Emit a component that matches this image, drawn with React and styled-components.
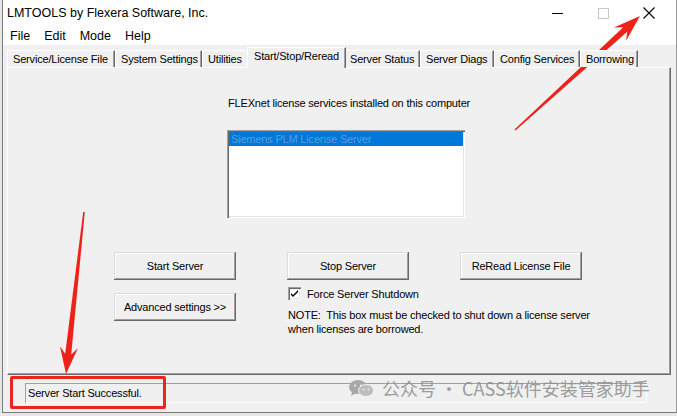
import styled, { createGlobalStyle } from "styled-components";

const GlobalStyle = createGlobalStyle`
  html, body {
    margin: 0;
    padding: 0;
  }
  body {
    background: #e6e6e6;
    font-family: "Liberation Sans", Arial, sans-serif;
    font-size: 11px;
    color: #000;
  }
`;

const Page = styled.div`
  position: relative;
  width: 677px;
  height: 416px;
  overflow: hidden;
  background: #e6e6e6;
`;

const Window = styled.div`
  margin-left: 2px;
  width: 675px;
  height: 413px;
  box-sizing: border-box;
  border-left: 1px solid #7a7a7a;
  border-right: 1px solid #9a9a9a;
  border-bottom: 1px solid #7a7a7a;
  display: flex;
  flex-direction: column;
  background: #f0f0f0;
`;

const TitleBar = styled.div`
  height: 26px;
  flex: none;
  display: flex;
  align-items: center;
  padding-left: 4px;
  background: #fff;
`;

const Title = styled.div`
  flex: 1;
  font-size: 12.5px;
  color: #000;
  white-space: nowrap;
`;

const TitleButtons = styled.div`
  display: flex;
  height: 100%;
  margin-right: 4px;
`;

const TitleButton = styled.div`
  width: 46px;
  height: 100%;
  display: flex;
  align-items: center;
  justify-content: center;
`;

const MenuBar = styled.div`
  height: 19px;
  flex: none;
  display: flex;
  align-items: center;
  gap: 14px;
  padding-left: 7px;
  background: #fff;
  font-size: 12.5px;
`;

const Client = styled.div`
  flex: 1;
  display: flex;
  flex-direction: column;
  padding: 2px 5px 0 4px;
  letter-spacing: -0.18px;
`;

const TabStrip = styled.div`
  height: 20px;
  display: flex;
  align-items: flex-end;
  position: relative;
  z-index: 1;
`;

const Tab = styled.div`
  width: ${({ $w }) => $w}px;
  height: ${({ $active }) => ($active ? 21 : 17)}px;
  margin: ${({ $active }) => ($active ? "0 -2px -1px" : "0")};
  box-sizing: border-box;
  flex: none;
  position: relative;
  z-index: ${({ $active }) => ($active ? 2 : 1)};
  background: #f0f0f0;
  border-top: 1px solid #fff;
  border-left: 1px solid #fff;
  border-right: 1px solid #696969;
  box-shadow: inset -1px 0 #a0a0a0;
  padding: ${({ $active }) => ($active ? "2px 0 0 6px" : "2px 0 0 5px")};
  white-space: nowrap;
  font-size: 11px;
  line-height: 13px;
`;

const Panel = styled.div`
  height: 308px;
  box-sizing: border-box;
  border-top: 1px solid #fff;
  border-left: 1px solid #fff;
  border-right: 1px solid #696969;
  border-bottom: 1px solid #696969;
  box-shadow: inset -1px -1px #a0a0a0;
  display: flex;
  flex-direction: column;
`;

const Caption = styled.div`
  margin: 28px 0 0 220px;
  line-height: 14px;
  white-space: nowrap;
`;

const ListBox = styled.div`
  margin: 20px 0 0 219px;
  width: 238px;
  height: 88px;
  box-sizing: border-box;
  padding: 2px 2px;
  background: #fff;
  box-shadow: inset 1px 1px #a0a0a0, inset 2px 2px #696969,
    inset -1px -1px #fff, inset -2px -2px #e3e3e3;
`;

const ListItem = styled.div`
  height: 14px;
  line-height: 14px;
  padding-left: 2px;
  background: ${({ $selected }) => ($selected ? "#0078d7" : "transparent")};
  color: ${({ $selected }) => ($selected ? "#5c9bd9" : "#000")};
  white-space: nowrap;
`;

const ButtonGrid = styled.div`
  margin: 34px 0 0 106px;
  display: grid;
  grid-template-columns: 122px 122px 122px;
  column-gap: 51px;
  row-gap: 7px;
  align-items: start;
`;

const Button = styled.button`
  width: 122px;
  height: 28px;
  margin-top: ${({ $offset }) => $offset || 0}px;
  box-sizing: border-box;
  padding: 0;
  border: none;
  background: #f0f0f0;
  font-family: "Liberation Sans", Arial, sans-serif;
  font-size: 11px;
  letter-spacing: -0.18px;
  color: #000;
  box-shadow: inset -1px -1px #696969, inset 1px 1px #dcdcdc,
    inset -2px -2px #a0a0a0, inset 2px 2px #fff;
`;

const Options = styled.div`
  grid-column: 2 / 4;
  margin-left: 1px;
`;

const CheckRow = styled.label`
  display: flex;
  align-items: center;
  gap: 6px;
  height: 13px;
  white-space: nowrap;
`;

const CheckBox = styled.span`
  width: 13px;
  height: 13px;
  box-sizing: border-box;
  display: flex;
  align-items: center;
  justify-content: center;
  background: #fff;
  box-shadow: inset 1px 1px #a0a0a0, inset 2px 2px #696969,
    inset -1px -1px #fff, inset -2px -2px #e3e3e3;
`;

const Note = styled.div`
  margin-top: 8px;
  line-height: 14px;
  white-space: nowrap;
`;

const StatusArea = styled.div`
  flex: 1;
  padding: 8px 0 0 18px;
`;

const StatusField = styled.div`
  width: 622px;
  height: 20px;
  box-sizing: border-box;
  padding-left: 3px;
  line-height: 20px;
  box-shadow: inset 1px 1px #a0a0a0, inset -1px -1px #fff;
  white-space: nowrap;
`;

const Overlay = styled.svg`
  position: absolute;
  left: 0;
  top: 0;
  pointer-events: none;
`;

const Callout = styled.div`
  position: absolute;
  left: 10px;
  top: 376px;
  width: 156px;
  height: 33px;
  box-sizing: border-box;
  border: 3px solid #e8261f;
  border-radius: 2px;
`;

const Watermark = styled.div`
  position: absolute;
  left: 349px;
  top: 377px;
  display: flex;
  align-items: center;
  gap: 8px;
  color: rgba(145, 145, 145, 0.9);
  font-family: "Noto Sans CJK SC", "Noto Sans", sans-serif;
  font-size: 18px;
  line-height: 22px;
  white-space: nowrap;
`;

const tabs = [
  { label: "Service/License File", w: 108 },
  { label: "System Settings", w: 87 },
  { label: "Utilities", w: 47 },
  { label: "Start/Stop/Reread", w: 99, active: true },
  { label: "Server Status", w: 76 },
  { label: "Server Diags", w: 74 },
  { label: "Config Services", w: 86 },
  { label: "Borrowing", w: 58 },
];

// tapered annotation arrow, tail -> tip
const arrowPoints = (x1, y1, x2, y2) => {
  const dx = x2 - x1;
  const dy = y2 - y1;
  const len = Math.hypot(dx, dy);
  const ux = dx / len;
  const uy = dy / len;
  const nx = -uy;
  const ny = ux;
  const at = (d, w) => [x1 + ux * d + nx * w, y1 + uy * d + ny * w];
  const pts = [
    at(0, 0.8),
    at(len - 20, 3),
    at(len - 27, 9),
    [x2, y2],
    at(len - 27, -9),
    at(len - 20, -3),
    at(0, -0.8),
  ];
  return pts.map((p) => p.map((v) => v.toFixed(1)).join(",")).join(" ");
};

const App = () => {
  return (
    <Page>
      <GlobalStyle />
      <Window>
        <TitleBar>
          <Title>LMTOOLS by Flexera Software, Inc.</Title>
          <TitleButtons>
            <TitleButton>
              <svg width="11" height="11" viewBox="0 0 11 11">
                <line x1="0" y1="5.5" x2="11" y2="5.5" stroke="#000" strokeWidth="1" />
              </svg>
            </TitleButton>
            <TitleButton>
              <svg width="11" height="11" viewBox="0 0 11 11">
                <rect x="0.5" y="0.5" width="10" height="10" fill="none" stroke="#c8c8c8" />
              </svg>
            </TitleButton>
            <TitleButton>
              <svg width="12" height="12" viewBox="0 0 12 12">
                <path d="M0.5 0.5 L11.5 11.5 M11.5 0.5 L0.5 11.5" stroke="#000" strokeWidth="1.1" />
              </svg>
            </TitleButton>
          </TitleButtons>
        </TitleBar>

        <MenuBar>
          <span>File</span>
          <span>Edit</span>
          <span>Mode</span>
          <span>Help</span>
        </MenuBar>

        <Client>
          <TabStrip>
            {tabs.map((t) => (
              <Tab key={t.label} $w={t.w} $active={t.active}>
                {t.label}
              </Tab>
            ))}
          </TabStrip>

          <Panel>
            <Caption>FLEXnet license services installed on this computer</Caption>
            <ListBox>
              <ListItem $selected>Siemens PLM License Server</ListItem>
            </ListBox>

            <ButtonGrid>
              <Button>Start Server</Button>
              <Button>Stop Server</Button>
              <Button>ReRead License File</Button>
              <Button $offset={6}>Advanced settings &gt;&gt;</Button>
              <Options>
                <CheckRow>
                  <CheckBox>
                    <svg width="7" height="7" viewBox="0 0 7 7">
                      <path d="M0 3 L0 5 L2 7 L7 2 L7 0 L2 5 Z" fill="#000" />
                    </svg>
                  </CheckBox>
                  Force Server Shutdown
                </CheckRow>
                <Note>
                  NOTE:&nbsp; This box must be checked to shut down a license server
                  <br />
                  when licenses are borrowed.
                </Note>
              </Options>
            </ButtonGrid>
          </Panel>

          <StatusArea>
            <StatusField>Server Start Successful.</StatusField>
          </StatusArea>
        </Client>
      </Window>

      <Callout />

      <Watermark>
        <svg width="25" height="17" viewBox="0 0 25 17">
          <ellipse cx="9" cy="7" rx="9" ry="7" fill="#a8a8a8" />
          <path d="M3 12 L2 16 L7 13 Z" fill="#a8a8a8" />
          <ellipse cx="17" cy="10.5" rx="7.5" ry="6" fill="#bdbdbd" stroke="#f0f0f0" strokeWidth="1" />
          <circle cx="6" cy="5.5" r="1.1" fill="#f0f0f0" />
          <circle cx="12" cy="5.5" r="1.1" fill="#f0f0f0" />
          <circle cx="14.5" cy="9.5" r="0.9" fill="#f0f0f0" />
          <circle cx="19.5" cy="9.5" r="0.9" fill="#f0f0f0" />
        </svg>
        <span>公众号 · CASS软件安装管家助手</span>
      </Watermark>

      <Overlay width="677" height="416" viewBox="0 0 677 416">
        <polygon points={arrowPoints(515, 130, 640, 16)} fill="#ee2219" />
        <polygon points={arrowPoints(84, 212, 66, 374)} fill="#ee2219" />
      </Overlay>
    </Page>
  );
};

export default App;
